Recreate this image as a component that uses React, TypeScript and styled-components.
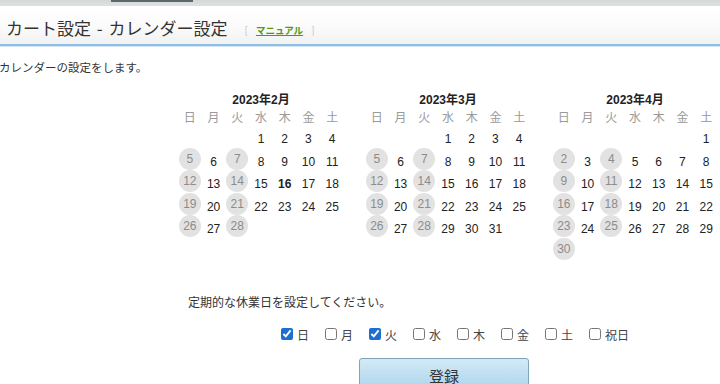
import React from "react";
import styled, { createGlobalStyle } from "styled-components";

const GlobalStyle = createGlobalStyle`
  html, body {
    margin: 0;
    padding: 0;
    background: #fff;
    overflow: hidden;
  }
  body {
    font-family: "Liberation Sans", "Noto Sans CJK JP", sans-serif;
    color: #333;
  }
`;

const weekdays = ["日", "月", "火", "水", "木", "金", "土"];

const months = [
  { label: "2023年2月", start: 3, days: 28, today: 16 },
  { label: "2023年3月", start: 3, days: 31, today: 0 },
  { label: "2023年4月", start: 6, days: 30, today: 0 },
];

const closedDays = [0, 2];

const checks = [
  { label: "日", checked: true },
  { label: "月", checked: false },
  { label: "火", checked: true },
  { label: "水", checked: false },
  { label: "木", checked: false },
  { label: "金", checked: false },
  { label: "土", checked: false },
  { label: "祝日", checked: false },
];

const buildWeeks = (start: number, days: number) => {
  const cells: (number | null)[] = [];
  for (let i = 0; i < start; i++) cells.push(null);
  for (let d = 1; d <= days; d++) cells.push(d);
  while (cells.length % 7 !== 0) cells.push(null);
  const weeks: (number | null)[][] = [];
  for (let i = 0; i < cells.length; i += 7) weeks.push(cells.slice(i, i + 7));
  return weeks;
};

const App = () => {
  return (
    <>
      <GlobalStyle />
      <TopStrip>
        <TabMark />
      </TopStrip>
      <Header>
        <Title>カート設定 - カレンダー設定</Title>
        <Manual>
          [<ManualLink>マニュアル</ManualLink>]
        </Manual>
      </Header>
      <Description>カレンダーの設定をします。</Description>

      <Calendars>
        {months.map((m) => (
          <Month key={m.label}>
            <MonthTitle>{m.label}</MonthTitle>
            <WeekRow>
              {weekdays.map((w) => (
                <WeekdayCell key={w}>{w}</WeekdayCell>
              ))}
            </WeekRow>
            {buildWeeks(m.start, m.days).map((week, wi) => (
              <DayRow key={wi}>
                {week.map((d, di) => (
                  <DayCell key={di}>
                    {d === null ? null : closedDays.includes(di) ? (
                      <Holiday>{d}</Holiday>
                    ) : (
                      <DayNum $today={d === m.today}>{d}</DayNum>
                    )}
                  </DayCell>
                ))}
              </DayRow>
            ))}
          </Month>
        ))}
      </Calendars>

      <Notice>定期的な休業日を設定してください。</Notice>
      <CheckRow>
        {checks.map((c) => (
          <CheckItem key={c.label}>
            <Box type="checkbox" defaultChecked={c.checked} />
            <span>{c.label}</span>
          </CheckItem>
        ))}
      </CheckRow>
      <SubmitButton>登録</SubmitButton>
    </>
  );
};

export default App;

const TopStrip = styled.div`
  height: 6px;
  background: linear-gradient(#d3d8d8, #dfe2e2);
`;

const TabMark = styled.div`
  margin-left: 111px;
  width: 82px;
  height: 2px;
  background: #5c6868;
`;

const Header = styled.div`
  height: 40px;
  box-sizing: border-box;
  display: flex;
  align-items: center;
  padding: 5px 0 0 6px;
  background: linear-gradient(#ffffff 0%, #fbfbfb 50%, #f1f2f2 100%);
  border-bottom: 2px solid #8fbde3;
  box-shadow: 0 1px 0 #d4e6f4;
`;

const Title = styled.h1`
  margin: 0;
  font-family: "Noto Sans CJK JP", sans-serif;
  font-size: 17px;
  font-weight: normal;
  color: #333;
  word-spacing: 2px;
`;

const Manual = styled.span`
  margin-left: 17px;
  margin-top: 3px;
  font-family: "Noto Sans CJK JP", sans-serif;
  font-size: 10px;
  color: #c4c4c4;
`;

const ManualLink = styled.a`
  margin: 0 8px;
  color: #4f9a10;
  font-weight: bold;
  text-decoration: underline;
  font-size: 9.5px;
`;

const Description = styled.p`
  margin: 13px 0 0 -1px;
  line-height: 16px;
  font-family: "Noto Sans CJK JP", sans-serif;
  font-size: 11.5px;
  color: #333;
`;

const Calendars = styled.div`
  display: flex;
  gap: 21px;
  padding-left: 178px;
  margin-top: 17px;
  height: 171px;
`;

const Month = styled.div`
  width: 166px;
  flex-shrink: 0;
`;

const MonthTitle = styled.div`
  text-align: center;
  line-height: 16px;
  font-size: 12px;
  font-weight: bold;
  color: #222;
  font-family: "Liberation Sans", "Noto Sans CJK JP", sans-serif;
`;

const WeekRow = styled.div`
  display: grid;
  grid-template-columns: repeat(7, 1fr);
  height: 20px;
`;

const WeekdayCell = styled.div`
  text-align: center;
  line-height: 18px;
  font-family: "Noto Sans CJK JP", sans-serif;
  font-size: 12px;
  color: #9a9a9a;
`;

const DayRow = styled.div`
  display: grid;
  grid-template-columns: repeat(7, 1fr);
  height: 22.5px;
`;

const DayCell = styled.div`
  display: flex;
  align-items: center;
  justify-content: center;
`;

const DayNum = styled.span<{ $today?: boolean }>`
  font-size: 12px;
  color: #222;
  font-weight: ${(p) => (p.$today ? "bold" : "normal")};
`;

const Holiday = styled.span`
  width: 22px;
  height: 22px;
  border-radius: 50%;
  background: #e2e2e2;
  display: flex;
  align-items: center;
  justify-content: center;
  font-size: 12px;
  color: #8c8c8c;
  transform: translateY(-3px);
`;

const Notice = styled.p`
  margin: 31px 0 0 188px;
  line-height: 16px;
  font-family: "Noto Sans CJK JP", sans-serif;
  font-size: 12px;
  color: #333;
`;

const CheckRow = styled.div`
  display: flex;
  margin: 16px 0 0 281px;
  height: 16px;
  align-items: center;
`;

const CheckItem = styled.label`
  display: flex;
  align-items: center;
  gap: 4px;
  width: 44px;
  flex-shrink: 0;
  font-family: "Noto Sans CJK JP", sans-serif;
  font-size: 12px;
  color: #444;
`;

const Box = styled.input`
  margin: 0;
  width: 12px;
  height: 12px;
  accent-color: #1c6fd1;
`;

const SubmitButton = styled.button`
  display: block;
  margin: 16px 0 0 359px;
  width: 170px;
  height: 34px;
  border: 1px solid #7fa5bd;
  border-radius: 3px;
  background: linear-gradient(#d4eaf6, #a9d3eb);
  font-family: "Noto Sans CJK JP", sans-serif;
  font-size: 15px;
  color: #333;
  padding: 0;
`;
